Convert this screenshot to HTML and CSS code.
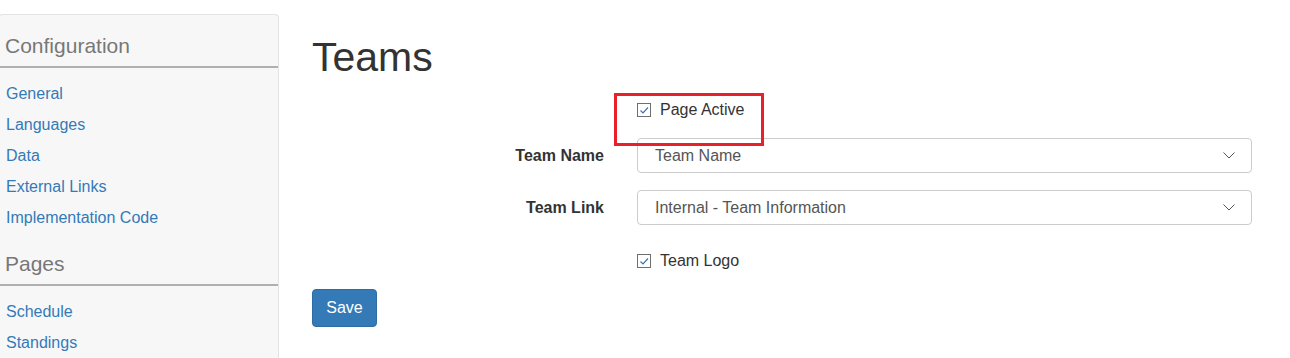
FILE: index.html
```html
<!DOCTYPE html>
<html lang="en">
  <head>
    <meta charset="UTF-8" />
    <meta name="viewport" content="width=device-width, initial-scale=1.0" />
    <title>Teams</title>
    <link rel="stylesheet" href="styles.css">
  </head>
  <body>
    <div class="layout">
      <div class="sidebar">
        <h3 class="side-heading">Configuration</h3>
        <ul class="side-links">
          <li><a href="#">General</a></li>
          <li><a href="#">Languages</a></li>
          <li><a href="#">Data</a></li>
          <li><a href="#">External Links</a></li>
          <li><a href="#">Implementation Code</a></li>
        </ul>
        <h3 class="side-heading">Pages</h3>
        <ul class="side-links">
          <li><a href="#">Schedule</a></li>
          <li><a href="#">Standings</a></li>
        </ul>
      </div>

      <div class="main">
        <h1 class="page-title">Teams</h1>
        <form class="team-form">
          <div class="form-row row-active">
            <div class="form-label"></div>
            <div class="form-control">
              <label class="check">
                <span class="check-box">
                  <svg width="12" height="12" viewBox="0 0 12 12"><path d="M2.5 6.5 L5 9 L10 3.5" fill="none" stroke="#3a73b8" stroke-width="1.2"/></svg>
                </span>
                Page Active
              </label>
              <div class="highlight"></div>
            </div>
          </div>

          <div class="form-row row-name">
            <label class="form-label">Team Name</label>
            <div class="form-control">
              <div class="select">
                <span>Team Name</span>
                <svg width="12" height="7" viewBox="0 0 12 7"><polyline points="0.5,0.5 6,6 11.5,0.5" fill="none" stroke="#555" stroke-width="1"/></svg>
              </div>
            </div>
          </div>

          <div class="form-row row-link">
            <label class="form-label">Team Link</label>
            <div class="form-control">
              <div class="select">
                <span>Internal - Team Information</span>
                <svg width="12" height="7" viewBox="0 0 12 7"><polyline points="0.5,0.5 6,6 11.5,0.5" fill="none" stroke="#555" stroke-width="1"/></svg>
              </div>
            </div>
          </div>

          <div class="form-row row-logo">
            <div class="form-label"></div>
            <div class="form-control">
              <label class="check">
                <span class="check-box">
                  <svg width="12" height="12" viewBox="0 0 12 12"><path d="M2.5 6.5 L5 9 L10 3.5" fill="none" stroke="#3a73b8" stroke-width="1.2"/></svg>
                </span>
                Team Logo
              </label>
            </div>
          </div>

          <button type="button" class="btn-save">Save</button>
        </form>
      </div>
    </div>
  </body>
</html>
```

FILE: styles.css
```css
body {
  margin: 0;
  font-family: 'Liberation Sans', Arial, sans-serif;
  font-size: 16px;
  color: #333;
  background: #fff;
  overflow: hidden;
}

.layout {
  display: flex;
  align-items: flex-start;
}

.sidebar {
  box-sizing: border-box;
  width: 280px;
  height: 344px;
  margin: 14px 0 0 -1px;
  padding-top: 19px;
  background: #f7f7f7;
  border: 1px solid #e3e3e3;
  border-bottom: none;
  border-radius: 4px 4px 0 0;
  flex-shrink: 0;
}

.side-heading {
  margin: 0;
  padding: 0 0 8px 5px;
  font-size: 21px;
  line-height: 24px;
  font-weight: normal;
  color: #777;
  border-bottom: 2px solid #b0b0b0;
}

.side-links {
  list-style: none;
  margin: 10px 0 19px;
  padding: 0 0 0 6px;
}

.side-links li {
  line-height: 31px;
}

.side-links a {
  color: #337ab7;
  text-decoration: none;
}

.main {
  margin-left: 33px;
}

.page-title {
  margin: 35px 0 0;
  font-size: 41px;
  line-height: 45px;
  font-weight: normal;
  color: #333;
}

.team-form {
  display: flex;
  flex-direction: column;
  align-items: flex-start;
}

.form-row {
  display: grid;
  grid-template-columns: 292px 615px;
  column-gap: 33px;
  align-items: center;
  height: 35px;
}

.row-active {
  position: relative;
  z-index: 2;
  margin-top: 13px;
  height: 34px;
}

.row-name {
  margin-top: 11px;
}

.row-link {
  margin-top: 17px;
}

.row-logo {
  margin-top: 19px;
  height: 34px;
}

.form-label {
  text-align: right;
  font-weight: bold;
  color: #333;
}

.form-control {
  position: relative;
}

.check {
  display: flex;
  align-items: center;
  gap: 9px;
  color: #333;
}

.check-box {
  width: 12px;
  height: 12px;
  border: 1px solid #6f6f6f;
  background: #fff;
  display: flex;
  align-items: center;
  justify-content: center;
}

.highlight {
  position: absolute;
  left: -23px;
  top: -8px;
  width: 144px;
  height: 47px;
  border: 3px solid #e8202a;
  pointer-events: none;
}

.select {
  display: flex;
  align-items: center;
  justify-content: space-between;
  height: 33px;
  padding: 0 16px 0 17px;
  border: 1px solid #ccc;
  border-radius: 4px;
  color: #555;
  background: #fff;
}

.btn-save {
  margin-top: 11px;
  width: 65px;
  height: 38px;
  padding: 0;
  font-family: inherit;
  font-size: 16px;
  color: #fff;
  background: #337ab7;
  border: 1px solid #2e6da4;
  border-radius: 4px;
}
```
